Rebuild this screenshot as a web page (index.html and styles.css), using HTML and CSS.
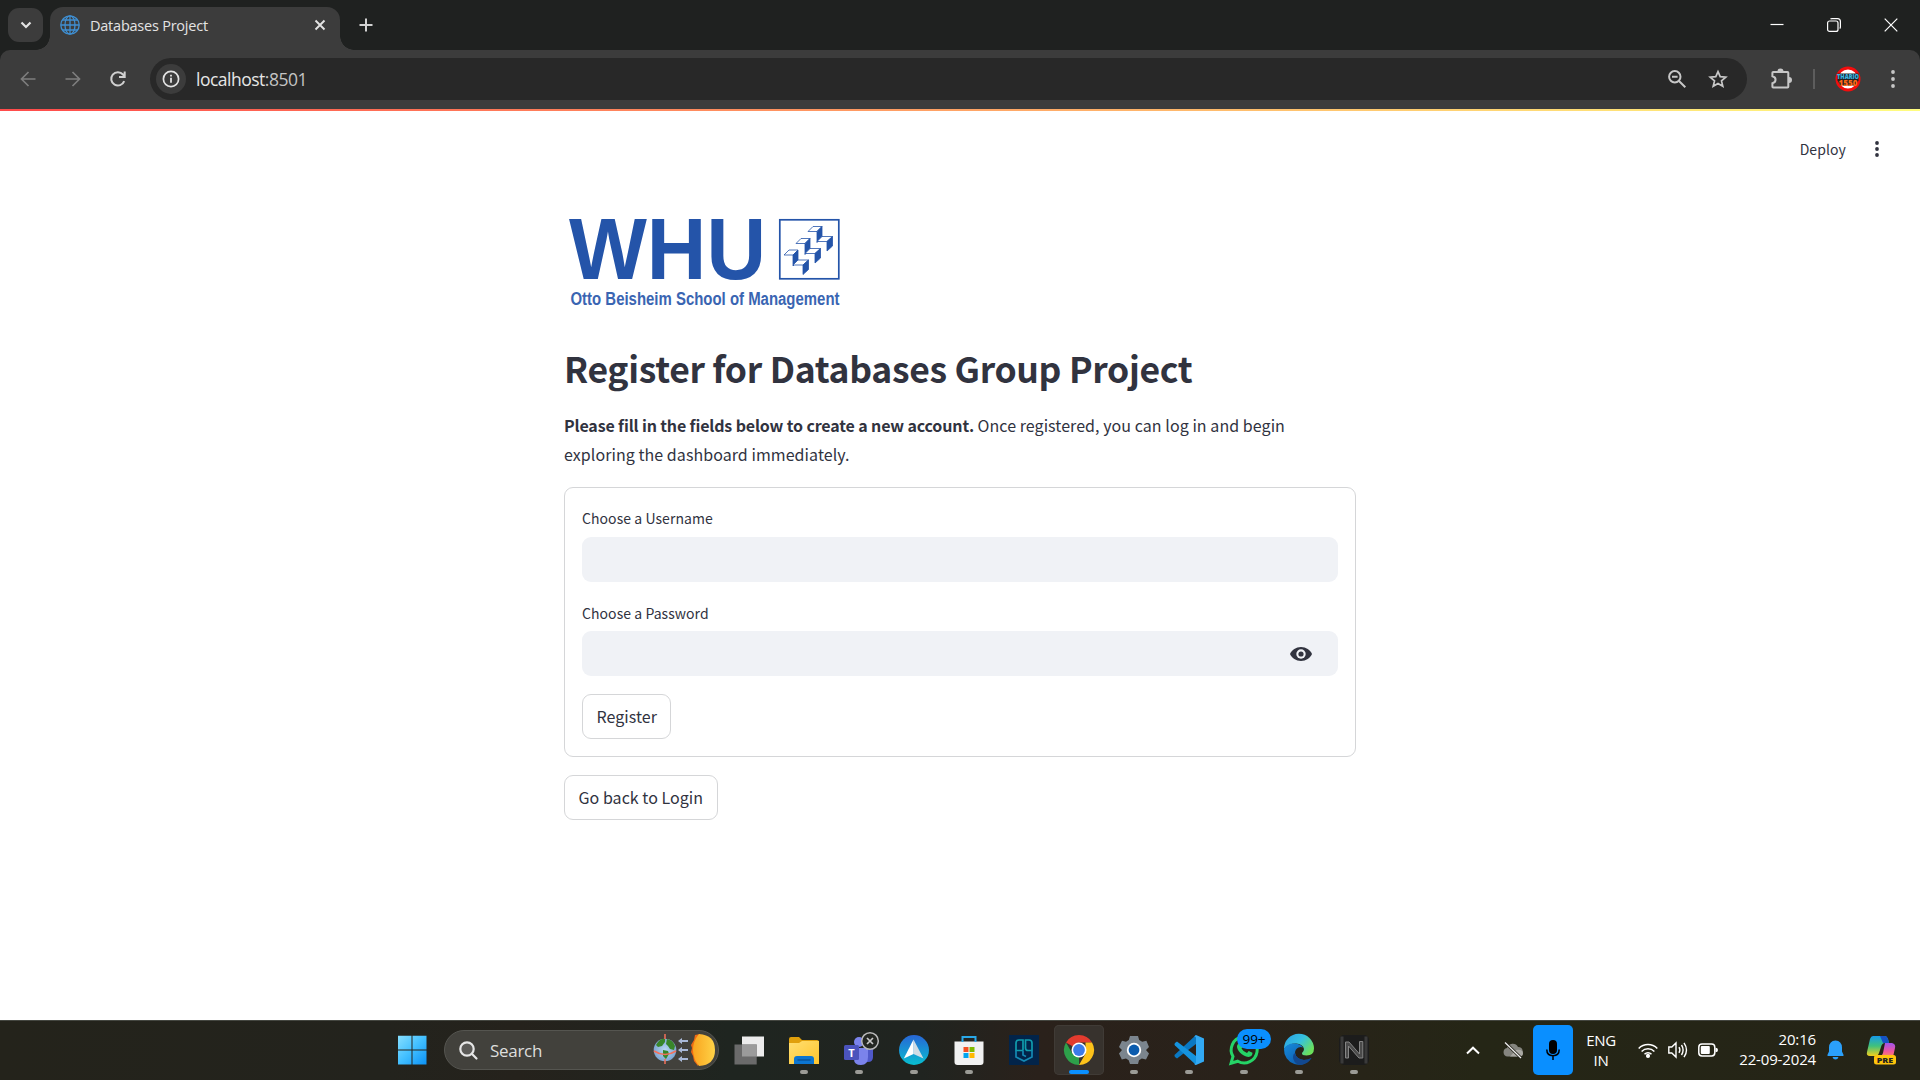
FILE: index.html
```html
<!DOCTYPE html>
<html lang="en">
<head>
<meta charset="utf-8">
<title>Databases Project</title>
<link rel="stylesheet" href="styles.css">
</head>
<body>
<div class="screen">
  <header class="tabstrip">
    <button class="tab-search" aria-label="Search tabs"><svg width="12" height="8" viewBox="0 0 12 8"><path d="M1.5 1.5 6 6l4.500-4.500" fill="none" stroke="#e3e3e3" stroke-width="2.200"/></svg></button>
    <div class="tab">
      <svg class="favicon" width="20" height="20" viewBox="0 0 20 20" fill="none" stroke="#3f8fd2" stroke-width="1.300"><circle cx="10" cy="10" r="9.200"/><ellipse cx="10" cy="10" rx="5" ry="9.200"/><path d="M10 1v18M1 10h18M2.500 5h15M2.500 15h15"/></svg>
      <span class="tab-title">Databases Project</span>
      <svg width="12" height="12" viewBox="0 0 12 12"><path d="M1.500 1.500l9 9m0-9l-9 9" stroke="#e3e3e3" stroke-width="1.900"/></svg>
    </div>
    <svg class="new-tab" width="14" height="14" viewBox="0 0 14 14"><path d="M7 .5v13M.5 7h13" stroke="#d2d2d2" stroke-width="2"/></svg>
    <div class="window-controls">
      <svg width="14" height="14" viewBox="0 0 14 14"><path d="M.5 6.500h13" stroke="#fff" stroke-width="1.200"/></svg>
      <svg width="14" height="14" viewBox="0 0 14 14" fill="none" stroke="#fff" stroke-width="1.200"><path d="M3.500 1.200Q4 .6 5 .6h5.500q2.900 0 2.900 2.900V9q0 1-.7 1.500" /><rect x=".6" y="3" width="10.400" height="10.400" rx="2"/></svg>
      <svg width="14" height="14" viewBox="0 0 14 14"><path d="M.7.700l12.600 12.600m0-12.600L.7 13.300" stroke="#fff" stroke-width="1.200"/></svg>
    </div>
  </header>

  <nav class="toolbar">
    <div class="nav-buttons">
      <svg width="16" height="16" viewBox="0 0 16 16" fill="none" stroke="#7d7d7d" stroke-width="1.700"><path d="M15.500 8H2M8.500 1 1.500 8l7 7"/></svg>
      <svg width="16" height="16" viewBox="0 0 16 16" fill="none" stroke="#7d7d7d" stroke-width="1.700"><path d="M.5 8H14M7.500 1l7 7-7 7"/></svg>
      <svg width="18" height="18" viewBox="0 0 18 18" fill="none" stroke="#d0d0d0" stroke-width="2"><path d="M15.200 11.200A6.700 6.700 0 1 1 14 4.500L15.500 6.300M15.700 1.500V7H10"/></svg>
    </div>
    <div class="omnibox">
      <span class="site-info"><svg width="18" height="18" viewBox="0 0 18 18"><circle cx="9" cy="9" r="7.600" fill="none" stroke="#e3e3e3" stroke-width="1.700"/><path d="M9 7.800v5M9 4.700v1.900" stroke="#e3e3e3" stroke-width="1.800"/></svg></span>
      <span class="url">localhost<span class="port">:8501</span></span>
      <svg class="zoom-icon" width="18" height="18" viewBox="0 0 18 18" fill="none" stroke="#c7c7c7" stroke-width="2"><circle cx="6.800" cy="6.800" r="5.700"/><path d="M11 11l6.300 6.300M4 6.800h5.600"/></svg>
      <svg width="20" height="20" viewBox="0 0 20 20" fill="none" stroke="#c7c7c7" stroke-width="1.700"><path d="M10 2.600l2.200 5.100 5.600.5-4.300 3.700 1.300 5.400-4.800-2.900-4.800 2.900 1.300-5.400L2.200 8.200l5.600-.5z"/></svg>
    </div>
    <svg class="extensions" width="22" height="22" viewBox="0 0 22 22"><path d="M3.200 4h14.300q.8 0 .8.800v14q0 .8-.8.800H3.200q-.8 0-.8-.8v-3.500c4.200-1 4.200-6 0-7V4.800q0-.8.800-.8z" fill="none" stroke="#c7c7c7" stroke-width="2"/><path d="M7.500 3.500a3 3 0 0 1 6 0zM19 9a3 3 0 0 1 0 6z" fill="#c7c7c7"/></svg>
    <span class="divider"></span>
    <svg class="avatar" width="26" height="26" viewBox="0 0 26 26"><circle cx="13" cy="13" r="11" fill="#fff" stroke="#f20d0d" stroke-width="3"/><path d="M2.500 7.500h21v7l-3 5h-15l-3-5z" fill="#222"/><text x="13" y="12.800" text-anchor="middle" textLength="22" lengthAdjust="spacingAndGlyphs" font-size="6" fill="#37b7e5">THARIO</text><text x="13" y="19.500" text-anchor="middle" textLength="19" lengthAdjust="spacingAndGlyphs" font-size="8.500" fill="#ff6812">1550</text></svg>
    <svg class="menu-dots" width="4" height="18" viewBox="0 0 4 18" fill="#c7c7c7"><circle cx="2" cy="2" r="1.900"/><circle cx="2" cy="9" r="1.900"/><circle cx="2" cy="16" r="1.900"/></svg>
  </nav>

  <main class="page">
    <div class="decoration"></div>
    <div class="app-header">
      <span class="deploy">Deploy</span>
      <svg width="4" height="16" viewBox="0 0 4 16" fill="#31333f"><circle cx="2" cy="2" r="1.900"/><circle cx="2" cy="8" r="1.900"/><circle cx="2" cy="14" r="1.900"/></svg>
    </div>
    <section class="content">
      <svg class="logo" width="282" height="100" viewBox="0 0 282 100" fill="#2454a9">
        <text class="logo-name" x="5" y="69.300" textLength="197" lengthAdjust="spacingAndGlyphs">WHU</text>
        <text class="logo-tag" x="6.500" y="94.500" textLength="269" lengthAdjust="spacingAndGlyphs">Otto Beisheim School of Management</text>
        <rect x="215.800" y="9.800" width="59" height="59" fill="none" stroke="#2454a9" stroke-width="1.700"/>
        <g stroke="#2454a9" stroke-width=".8">
          <g id="step"><path d="M244 21.500l5-5h9l-5 5z" fill="#fff"/><path d="M253 21.500l5-5v11l-5 5z"/><path d="M253 31.500l5-5h10.500l-5.500 5z" fill="#fff"/><path d="M263 31.500l5.500-5v9.500l-5.500 5z"/></g>
          <use href="#step" x="-12" y="12"/>
          <use href="#step" x="-24" y="23.500"/>
        </g>
      </svg>
      <h1>Register for Databases Group Project</h1>
      <p class="intro"><strong>Please fill in the fields below to create a new account.</strong> Once registered, you can log in and begin<br>exploring the dashboard immediately.</p>
      <form class="card">
        <label class="field"><span class="label">Choose a Username</span><span class="input"></span></label>
        <label class="field"><span class="label">Choose a Password</span><span class="input"><svg width="22" height="14" viewBox="0 0 22 14"><path d="M11 0C6 0 1.800 2.900 0 7c1.800 4.100 6 7 11 7s9.200-2.900 11-7C20.200 2.900 16 0 11 0z" fill="#31333f"/><circle cx="11" cy="7" r="4.700" fill="#f0f2f6"/><circle cx="11" cy="7" r="2.600" fill="#31333f"/></svg></span></label>
        <button type="button" class="btn">Register</button>
      </form>
      <button type="button" class="btn back">Go back to Login</button>
    </section>
  </main>

  <footer class="taskbar">
    <div class="task start"><svg width="30" height="30" viewBox="0 0 30 30"><defs><linearGradient id="win" gradientUnits="userSpaceOnUse" x1="0" y1="0" x2="30" y2="30"><stop offset="0" stop-color="#8be1ff"/><stop offset=".5" stop-color="#42bfff"/><stop offset="1" stop-color="#0a90f5"/></linearGradient></defs><path d="M1 .8h13.500v13.700H1zM15.500.8H29.500v13.700h-14zM1 15.500h13.500v14H1zM15.500 15.500h14v14h-14z" fill="url(#win)"/></svg></div>
    <div class="search">
      <svg width="19" height="19" viewBox="0 0 19 19" fill="none" stroke="#e6e6e6" stroke-width="2.200"><circle cx="8" cy="8" r="6.700" fill="#5b5a57"/><path d="M12.800 12.800l4.700 4.700" stroke-linecap="round"/></svg>
      <span class="search-text">Search</span>
      <svg class="equinox" width="64" height="34" viewBox="0 0 64 34"><defs><radialGradient id="sea"><stop offset="0" stop-color="#b8d8f2"/><stop offset="1" stop-color="#7fa6d2"/></radialGradient><linearGradient id="sun"><stop offset="0" stop-color="#f9a51f"/><stop offset="1" stop-color="#ffd247"/></linearGradient></defs><circle cx="13" cy="17" r="11.300" fill="url(#sea)"/><path d="M6 9q3-4 7-3l0 3-3 4-4 1-2-2zM15 6q6 1 8 7l-1 4-4-1-2-3-2-2zM11 17l5 1 1 3-3 5-3-3z" fill="#38862a"/><path d="M13 1v5M13 26v5M2 18q11 7 22 0" fill="none" stroke="#f4705a" stroke-width="1.500"/><path d="M28 8h8M28 17h8M28 26h8" stroke="#a9b9d8" stroke-width="2"/><path d="M30 5v6l-4-3zM30 14v6l-4-3zM30 23v6l-4-3z" fill="#a9b9d8"/><path d="M48 1l-5 1-1 5-3 5 1 3-1 4 2 4 1 5 4 5z" fill="#ed6a13"/><path d="M47 1q16 1 16 16T47 33q-6-7-6-16t6-16z" fill="url(#sun)"/></svg>
    </div>
    <div class="apps">
      <div class="task"><svg width="30" height="30" viewBox="0 0 30 30"><path d="M8 1.500h22v20H8z" fill="#ececec"/><path d="M.5 9.500h22.200v20H.5z" fill="#6a6a6a"/><path d="M8 9.500h14.700v12H8z" fill="#9b9b9b"/></svg></div>
      <div class="task open"><svg width="30" height="30" viewBox="0 0 30 30"><defs><linearGradient id="fold" x2="1" y2="1"><stop stop-color="#ffdf72"/><stop offset="1" stop-color="#ffc52c"/></linearGradient></defs><path d="M0 4q0-2 2-2h8l3 3h15q2 0 2 2v8H0z" fill="#e0a00c"/><path d="M0 8h10l3-2h17v23H0z" fill="url(#fold)"/><path d="M5 29v-5q0-3 3-3h14q3 0 3 3v5z" fill="#0c75d0"/><path d="M9 25h12" stroke="#08549b" stroke-width="1.500" stroke-linecap="round"/></svg></div>
      <div class="task open"><svg width="38" height="34" viewBox="-4 -4 38 34"><circle cx="25" cy="7" r="4" fill="#5059c9"/><path d="M20 12h9v8q0 5-5 5h-4z" fill="#5059c9"/><circle cx="15" cy="5" r="5" fill="#7b83eb"/><path d="M10 11h14v9q0 8-7 8t-7-6z" fill="#7b83eb"/><rect x="0" y="8" width="15" height="15" rx="1.500" fill="#4b53bc"/><text class="teams-t" x="7.500" y="20" text-anchor="middle">T</text><circle cx="26" cy="4" r="8.300" fill="#242722" stroke="#b9b9b9" stroke-width="1.500"/><path d="M23 1l6 6m0-6l-6 6" stroke="#c9c9c9" stroke-width="1.700"/></svg></div>
      <div class="task open"><svg width="30" height="30" viewBox="0 0 30 30"><defs><linearGradient id="nav" x2="0" y2="1"><stop stop-color="#2866d6"/><stop offset="1" stop-color="#08bfd0"/></linearGradient></defs><circle cx="15" cy="15" r="15" fill="url(#nav)"/><path d="M14.500 4.500L24.500 23.500 14.500 19z" fill="#cfdce5"/><path d="M14.500 4.500L4.800 23.500l9.700-4.500z" fill="#fff"/></svg></div>
      <div class="task open"><svg width="30" height="30" viewBox="0 0 30 30"><path d="M.5 6.500h29V27q0 3-3 3h-23q-3 0-3-3z" fill="#f1f1f1"/><path d="M8.500 7V2h13v5" fill="none" stroke="#29a8e8" stroke-width="2"/><path d="M9.500 12h5v5h-5z" fill="#f25022"/><path d="M15.500 12h5v5h-5z" fill="#7fba00"/><path d="M9.500 18h5v5h-5z" fill="#00a4ef"/><path d="M15.500 18h5v5h-5z" fill="#ffb900"/></svg></div>
      <div class="task"><svg width="30" height="30" viewBox="0 0 30 30"><path d="M0 0h30v30H0z" fill="#02244a"/><g fill="none" stroke="#109cad" stroke-width="1.700"><path d="M14 15.500V5h-4Q7 5 7 8v7.500h7M16.500 5H20q3 0 3 3v7.500h-4q-2.500 0-2.500-2.500z"/><path d="M7 15.500V22l8 4 8-4v-6.500M14 15.500V20l3 1.500" stroke="#1488b4"/></g></svg></div>
      <div class="task open active"><svg width="30" height="30" viewBox="0 0 30 30"><path d="M2 7.500A15 15 0 0 1 28 7.500H15L8.500 11.250z" fill="#e33b2e"/><path d="M2 7.500L8.500 18.750 15 22.500l0 7.500A15 15 0 0 1 2 7.500z" fill="#2da04a"/><path d="M28 7.500A15 15 0 0 1 15 30l6.500-11.250V7.500z" fill="#fdc21a"/><circle cx="15" cy="15" r="7.500" fill="#fff"/><circle cx="15" cy="15" r="5.900" fill="#3c7bea"/></svg></div>
      <div class="task open"><svg width="30" height="30" viewBox="0 0 30 30"><path d="M11 1h8l1.200 4 3 1.700 4.200-.9L30 12l-3 3 3 3.500-3 6-4.200-1-2.800 1.700L19 29h-8l-1.300-3.800L7 23.500l-4.200 1L0 18.500 3 15l-3-3 3-6.200 4 1L9.800 5z" fill="#7b858e"/><circle cx="15" cy="15" r="7.200" fill="#fff"/><circle cx="15" cy="15" r="5.400" fill="#0b5cae"/></svg></div>
      <div class="task open"><svg width="30" height="30" viewBox="0 0 30 30"><path d="M22 0L1 19.500q-1.300 1.300 0 2.500L3 23.500 22 9z" fill="#0a78c2"/><path d="M22 30L1 10.500Q-.3 9.200 1 8l2-1.500L22 21z" fill="#1593de"/><path d="M22 0l8 3.500v23L22 30q-1 0-2-1.500 2 .8 2-1.500V3q0-2-2-1.500z" fill="#32a9f3"/></svg></div>
      <div class="task open"><svg class="whatsapp" width="30" height="30" viewBox="0 0 30 30"><path d="M2 28.300l2-6.800A13 13 0 1 1 8.800 26.200z" fill="none" stroke="#25d366" stroke-width="3"/><path d="M10 8q2-1 3 1l1 2.500-1.500 2q2 3.500 5.500 4.500l1.700-2 3.800 1.800q0 4-4 4.200C13 21.500 7.500 14.500 8 11q.5-2 2-3z" fill="#25d366"/></svg><span class="badge">99+</span></div>
      <div class="task open"><svg width="30" height="30" viewBox="0 0 30 30"><defs><linearGradient id="edge" x2="1" y2=".6"><stop stop-color="#2a9fe4"/><stop offset=".55" stop-color="#35c1e0"/><stop offset="1" stop-color="#6be05d"/></linearGradient><linearGradient id="edge2" x2="1" y2="1"><stop stop-color="#168bdc"/><stop offset="1" stop-color="#0b4f9f"/></linearGradient></defs><path d="M0 14A15 15 0 0 1 30 13.500q0 7-7.500 7-5 0-4.500-2.500 2-1.500 2-4Q19 9 12 8.500 4 8.500 0 14z" fill="url(#edge)"/><path d="M0 14Q3 8 11 8.500q6 .5 8 4-2-1-4.500 0Q11 14 11 18q1 6 9 7 4 0 7.500-2A15 15 0 0 1 0 14z" fill="url(#edge2)"/><path d="M11 18q1 6 9 7 4 0 7.500-2-4 7-12.500 7-6-3-6-8 0-3 2-4z" fill="#12488f"/></svg></div>
      <div class="task open"><svg width="30" height="30" viewBox="0 0 30 30"><rect width="30" height="30" rx="5" fill="#1c1c1c"/><path d="M1.500 1.500h3v27h-3zM25.500 1.500h3v27h-3z" fill="#3a3a3a"/><path d="M6.500 23V7H10l10.500 12V6.500h3.300V23H20L9.500 11v12z" fill="#4a4a4a" stroke="#858585" stroke-width="1"/></svg></div>
    </div>
    <div class="tray">
      <span class="cell wide"><svg width="14" height="9" viewBox="0 0 14 9"><path d="M1 7.500L7 1.700l6 5.800" fill="none" stroke="#fff" stroke-width="2"/></svg></span>
      <span class="cell wide"><svg width="20" height="16" viewBox="0 0 20 16"><path d="M4.500 14.500a4.300 4.300 0 0 1-.5-8.500A6 6 0 0 1 15 5a4.800 4.800 0 0 1 1 9.500z" fill="#85857f"/><path d="M7 14.500L13 8q7-1 7 3.500 0 3-3.500 3z" fill="#aaa9a3"/><path d="M2 .5L18 16" stroke="#25241a" stroke-width="3"/><path d="M2 .5L18 16" stroke="#f2f2f2" stroke-width="1.200"/></svg></span>
      <span class="mic"><svg width="14" height="20" viewBox="0 0 14 20"><rect x="3" y="0" width="8" height="14" rx="4"/><path d="M.8 9.500q0 6.200 6.200 6.200t6.200-6.200M7 15.500V20" fill="none" stroke="#000" stroke-width="1.500"/></svg></span>
      <span class="lang"><span>ENG</span><span>IN</span></span>
      <span class="cell"><svg width="20" height="15" viewBox="0 0 20 15" fill="none" stroke="#fff" stroke-width="1.500"><path d="M.7 5.500a13 13 0 0 1 18.600 0M3.600 8.500a9 9 0 0 1 12.800 0M6.500 11.300a5 5 0 0 1 7 0"/><circle cx="10" cy="12.900" r="1.300" fill="#fff"/></svg></span>
      <span class="cell"><svg width="20" height="18" viewBox="0 0 20 18" fill="none" stroke="#fff" stroke-width="1.400"><path d="M.8 6h3L8 2v14l-4.200-4h-3zM11 6.200q1.800 2.800 0 5.600M13.500 4q3.200 5 0 10M16 1.800q5 7.200 0 14.400"/></svg></span>
      <span class="cell"><svg width="20" height="14" viewBox="0 0 20 14"><rect x=".8" y="1" width="16" height="12" rx="3.200" fill="none" stroke="#fff" stroke-width="1.500"/><rect x="2.800" y="3" width="9" height="8" rx="1" fill="#fff"/><path d="M17.500 4.700q2.500 0 2.500 2.300t-2.500 2.300z" fill="#fff"/></svg></span>
      <span class="clock"><span>20:16</span><span class="date">22-09-2024</span></span>
      <span class="bell"><svg width="17" height="20" viewBox="0 0 17 20" fill="#2ba0fa"><path d="M8.500.5q6.200.3 6.500 7v4l1.600 3.500q.3 1-.8 1H1.200q-1.100 0-.8-1L2 11.500v-4q.3-6.700 6.500-7zM5.500 17h6q-.7 2.500-3 2.500t-3-2.500z"/></svg></span>
      <span class="copilot"><svg width="30" height="30" viewBox="0 0 30 30"><defs><linearGradient id="cpa" x2="0" y2="1"><stop stop-color="#169bea"/><stop offset=".5" stop-color="#3fc17c"/><stop offset="1" stop-color="#f4d01c"/></linearGradient><linearGradient id="cpb" x2="0" y2="1"><stop stop-color="#a054ed"/><stop offset=".6" stop-color="#f0569d"/><stop offset="1" stop-color="#fb8a5c"/></linearGradient></defs><path d="M7 1h12q2 0 3 3l1 4h-4q-3 0-4 4l-2 6q-1 3-4 3H4Q0 21 1 17L4 4q1-3 3-3z" fill="url(#cpa)"/><path d="M14 1h5q2 0 3 3l1 4h-6z" fill="#1552c5"/><path d="M19 8h7q4 1 3 5l-2 9H14q2-1 3-4z" fill="url(#cpb)"/><rect x="8" y="20" width="22" height="9.500" rx="2.500" fill="#ffc40c"/><text class="pre" x="19" y="27.600" text-anchor="middle" textLength="16.500" lengthAdjust="spacingAndGlyphs">PRE</text></svg></span>
    </div>
  </footer>
</div>
</body>
</html>
```
FILE: styles.css
```css
* { box-sizing: border-box; }
body { margin: 0; font-family: "Open Sans", "Noto Sans", sans-serif; }
svg { display: block; flex: none; overflow: visible; }
button { font: inherit; }
.screen { width: 1920px; height: 1080px; display: flex; flex-direction: column; overflow: hidden; background: #fff; }

.tabstrip { height: 50px; flex: none; display: flex; align-items: center; padding-left: 8px; background: #1f2120; }
.tab-search { width: 35px; height: 34px; padding: 0; border: 0; border-radius: 11px; background: #3c3c3c; display: flex; align-items: center; justify-content: center; }
.tab { position: relative; width: 290px; height: 43px; margin: 7px 0 0 7px; padding: 0 14px 8px 10px; display: flex; align-items: center; background: #3c3c3c; border-radius: 13px 13px 0 0; }
.tab::before, .tab::after { content: ""; position: absolute; bottom: 0; width: 14px; height: 14px; }
.tab::before { left: -14px; background: radial-gradient(circle at 0 0, transparent 13.500px, #3c3c3c 14px); }
.tab::after { right: -14px; background: radial-gradient(circle at 100% 0, transparent 13.500px, #3c3c3c 14px); }
.tab-title { flex: 1; margin-left: 10px; padding-top: 1px; font-size: 14.500px; letter-spacing: -0.230px; color: #e3e3e3; white-space: nowrap; }
.new-tab { margin-left: 18.500px; }
.window-controls { margin-left: auto; padding-right: 22px; display: flex; gap: 43px; }

.toolbar { height: 59px; flex: none; padding-bottom: 1px; display: flex; align-items: center; background: #3c3c3c; border-radius: 10px 10px 0 0; box-shadow: 0 -10px 0 #1f2120; clip-path: inset(0); }
.nav-buttons { width: 150px; padding-left: 20px; display: flex; align-items: center; gap: 28.500px; }
.omnibox { width: 1597px; height: 42px; padding: 0 19px 0 6px; display: flex; align-items: center; border-radius: 21px; background: #282828; }
.site-info { width: 30px; height: 30px; border-radius: 50%; background: #3c3c3c; display: flex; align-items: center; justify-content: center; }
.url { margin-left: 10px; font-size: 17.500px; letter-spacing: -0.500px; color: #e6e6e6; }
.port { color: #c4c4c4; }
.zoom-icon { margin-left: auto; margin-right: 22px; }
.extensions { margin-left: 23px; }
.divider { width: 2px; height: 20px; margin-left: 21px; background: #5d5d5d; }
.avatar { margin-left: 20px; font-family: "Open Sans", sans-serif; font-weight: 800; }
.menu-dots { margin-left: 29.500px; }

.page { height: 911px; flex: none; font-family: "Noto Sans CJK SC", "Noto Sans", sans-serif; color: #31333f; }
.decoration { height: 2px; background: linear-gradient(90deg, #ff4b4b, #fffd80); }
.app-header { height: 76px; padding-right: 41px; display: flex; align-items: center; justify-content: flex-end; gap: 29px; }
.deploy { padding-bottom: 1px; font-size: 14px; letter-spacing: 0.100px; }
.content { width: 792px; margin: 23px auto 0; display: flex; flex-direction: column; align-items: flex-start; }
.logo-name { font: bold 87px "Liberation Sans", sans-serif; }
.logo-tag { font: bold 17.500px "Liberation Sans Narrow", "Liberation Sans", sans-serif; fill: #3a65b2; }
h1 { margin: 33px 0 0; font-size: 35.500px; line-height: 50px; font-weight: 600; letter-spacing: -0.310px; white-space: nowrap; }
.intro { margin: 18px 0 19px; font-size: 16px; line-height: 28.500px; letter-spacing: 0.060px; white-space: nowrap; }
.intro strong { letter-spacing: -0.140px; }
.card { width: 792px; height: 270px; padding: 17px; border: 1px solid #d5d6d8; border-radius: 9px; display: flex; flex-direction: column; align-items: flex-start; }
.field { width: 100%; margin-bottom: 18px; display: flex; flex-direction: column; }
.label { height: 31px; line-height: 26px; font-size: 14px; letter-spacing: 0.060px; }
.field:first-child .label { height: 32px; }
.input { height: 45px; padding-right: 26px; border-radius: 9px; background: #f0f2f6; display: flex; align-items: center; justify-content: flex-end; }
.btn { height: 45px; padding: 0 13.500px 2px; border: 1px solid #d5d6d8; border-radius: 9px; background: #fff; color: #31333f; font-size: 16px; letter-spacing: 0.040px; white-space: nowrap; }
.back { margin-top: 18px; }

.taskbar { height: 60px; flex: none; padding: 0 13px 1px 387px; display: flex; align-items: center; border-top: 1px solid #444640; background: linear-gradient(90deg, #24231b, #23231d 20%, #25221c 27%, #1f2520 38%, #202420 48%, #2a211b 54%, #29221a 65%, #252616 77%, #252417); color: #fff; }
.task { position: relative; width: 50px; height: 50px; display: flex; align-items: center; justify-content: center; border-radius: 5px; }
.search { width: 275px; height: 40px; margin: 0 5px 0 7px; padding: 0 2px 0 14px; display: flex; align-items: center; border: 1px solid #555550; border-radius: 20px; background: #42413c; }
.search-text { margin-left: 12px; font-size: 17px; letter-spacing: -0.300px; color: #dededc; }
.equinox { margin-left: auto; }
.apps { display: flex; gap: 5px; }
.open::after { content: ""; position: absolute; left: 21px; bottom: 1px; width: 8px; height: 4px; border-radius: 2px; background: #9b9b96; }
.active { background: #37322d; box-shadow: inset 0 0 0 1px #403b36; }
.active::after { left: 15px; width: 20px; background: #0a90ff; }
.teams-t { font: bold 11px "Open Sans", sans-serif; fill: #fff; }
.badge { position: absolute; left: 18px; top: 4px; width: 34px; height: 20px; border-radius: 10px; background: #0a8fff; color: #000; font-size: 13.500px; line-height: 20px; text-align: center; }
.tray { margin-left: auto; display: flex; align-items: center; height: 50px; }
.cell { width: 30px; display: flex; justify-content: center; }
.wide { width: 40px; }
.mic { width: 40px; height: 50px; border-radius: 5px; background: #0a8fff; display: flex; align-items: center; justify-content: center; }
.lang, .clock { display: flex; flex-direction: column; padding-bottom: 2px; font-size: 15px; line-height: 20px; letter-spacing: -0.300px; }
.lang { width: 56px; margin-right: 4px; padding-bottom: 0; align-items: center; }
.clock { width: 93px; align-items: flex-end; white-space: nowrap; letter-spacing: -0.150px; }
.bell { width: 38px; display: flex; justify-content: center; }
.copilot { width: 53px; display: flex; justify-content: center; }
.pre { font: 800 7.500px "Open Sans", sans-serif; fill: #222; }
```
